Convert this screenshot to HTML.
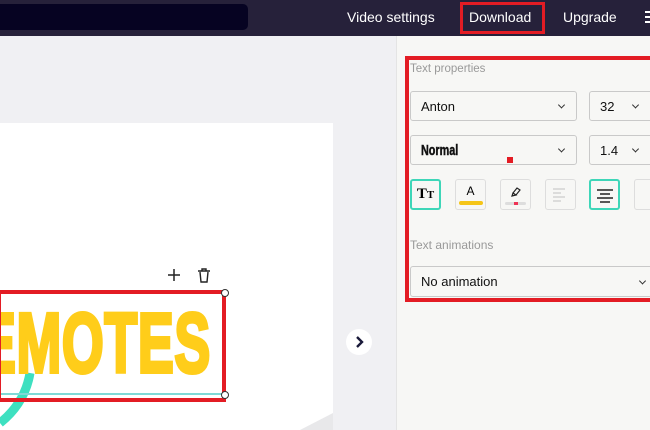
<!DOCTYPE html><html><head><style>
*{margin:0;padding:0;box-sizing:border-box}
html{width:650px;height:430px;overflow:hidden}
body{width:650px;height:430px;overflow:hidden;position:relative;background:#f0f0f3;font-family:"Liberation Sans",sans-serif}
.a{position:absolute}
.sel{position:absolute;border:1px solid #c9c9c9;border-radius:3px;background:#f7f7f5;font-size:13px;color:#111;padding-left:10px;display:flex;align-items:center}
.sel .c{position:absolute;right:12px;top:50%;width:5px;height:5px;border-right:1.3px solid #333;border-bottom:1.3px solid #333;transform:translateY(-70%) rotate(45deg)}
.ib{position:absolute;top:179px;width:31px;height:31px;border:1.5px solid #ddd;border-radius:3px;background:#f7f7f5}
</style></head><body>
<div class="a" style="left:0;top:0;width:650px;height:36px;background:#26213a"></div>
<div class="a" style="left:0;top:4px;width:248px;height:26px;background:#060322;border-radius:0 5px 5px 0"></div>
<div class="a" style="left:347px;top:9px;color:#fff;font-size:14px">Video settings</div>
<div class="a" style="left:469px;top:9px;color:#fff;font-size:14px">Download</div>
<div class="a" style="left:460px;top:2px;width:85px;height:32px;border:3px solid #e31c24"></div>
<div class="a" style="left:563px;top:9px;color:#fff;font-size:14px">Upgrade</div>
<div class="a" style="left:645px;top:11px;width:6px;height:2px;background:#fff;box-shadow:0 5px 0 #fff,0 10px 0 #fff"></div>

<div class="a" style="left:0;top:123px;width:333px;height:307px;background:#fff;overflow:hidden">
<div class="a" style="left:0;top:0;width:333px;height:307px;background:#e8e8ea;clip-path:polygon(333px 290px,333px 307px,300px 307px)"></div>
<svg class="a" style="left:0;top:230px" width="60" height="80"><path d="M30 20 Q25 50 0 70" stroke="#3ee0c0" stroke-width="9" fill="none"/></svg>
</div>
<div class="a" style="left:-20px;top:298px;font-family:'Liberation Sans',sans-serif;font-weight:bold;font-size:84px;color:#ffcd1a;-webkit-text-stroke:4px #ffcd1a;transform:scaleX(0.64);transform-origin:0 0;letter-spacing:1px;line-height:90px;white-space:nowrap;width:400px">EMOTES</div>
<div class="a" style="left:0;top:393px;width:224px;height:2px;background:#7fd9d6"></div>
<div class="a" style="left:-3px;top:290px;width:229px;height:112px;border:4px solid #e31c24"></div>
<div class="a" style="left:221px;top:289px;width:8px;height:8px;border:1px solid #333;border-radius:50%;background:#fff"></div>
<div class="a" style="left:221px;top:391px;width:8px;height:8px;border:1px solid #333;border-radius:50%;background:#fff"></div>
<div class="a" style="left:162px;top:263px;width:24px;height:24px;background:#fff;border-radius:3px"></div>
<div class="a" style="left:192px;top:263px;width:24px;height:24px;background:#fff;border-radius:3px"></div>
<svg class="a" style="left:162px;top:263px" width="54" height="24"><path d="M12 6v12M6 12h12" stroke="#222" stroke-width="1.5"/><path d="M36 8h12M40 8V6h4v2M38 9l1 10h6l1-10" stroke="#222" stroke-width="1.4" fill="none"/></svg>
<div class="a" style="left:346px;top:329px;width:26px;height:26px;border-radius:50%;background:#fff"></div>
<svg class="a" style="left:346px;top:329px" width="26" height="26"><path d="M11 8l5 5-5 5" stroke="#1a1a3a" stroke-width="2.4" fill="none"/></svg>

<div class="a" style="left:396px;top:36px;width:254px;height:394px;background:#f7f7f5;border-left:1px solid #e4e4e4"></div>
<div class="a" style="left:410px;top:63px;font-size:11.5px;color:#999">Text properties</div>
<div class="sel" style="left:410px;top:91px;width:167px;height:30px">Anton<span class="c"></span></div>
<div class="sel" style="left:589px;top:91px;width:70px;height:30px">32<span class="c" style="right:20px"></span></div>
<div class="sel" style="left:410px;top:135px;width:167px;height:30px;font-weight:bold;font-size:15px;"><span style="display:inline-block;transform:scaleX(.72);transform-origin:0 50%;-webkit-text-stroke:.5px #111">Normal</span><span class="c"></span></div>
<div class="sel" style="left:589px;top:135px;width:70px;height:30px">1.4<span class="c" style="right:20px"></span></div>
<div class="a" style="left:507px;top:157px;width:6px;height:6px;background:#e31c24"></div>
<div class="ib" style="left:410px;border:2px solid #3ed6b8;font-family:'Liberation Serif',serif;font-weight:bold;font-size:15px;text-align:center;line-height:27px">T<span style="font-size:11px">T</span></div>
<div class="ib" style="left:455px;text-align:center;font-size:12px;line-height:22px">A<div class="a" style="left:3px;top:21px;width:24px;height:4px;background:#f5c518;border-radius:2px"></div></div>
<div class="ib" style="left:500px"><svg width="28" height="28"><path d="M12 13l4-5 3 2-4 5zM11 16l1-3 3 2z" stroke="#222" fill="none" stroke-width="1.2"/><rect x="4" y="22" width="21" height="3" rx="1.5" fill="#ddd"/><rect x="13" y="22" width="4" height="3" fill="#e35"/></svg></div>
<div class="ib" style="left:545px"><svg width="28" height="28"><path d="M7 9h12M7 13h8M7 17h12M7 21h8" stroke="#ccc" stroke-width="1.2"/></svg></div>
<div class="ib" style="left:589px;border:2px solid #3ed6b8"><svg width="28" height="28"><path d="M6 9h16M9 13h10M6 17h16M9 21h10" stroke="#222" stroke-width="1.4"/></svg></div>
<div class="ib" style="left:634px"></div>
<div class="a" style="left:410px;top:238px;font-size:12px;color:#999">Text animations</div>
<div class="sel" style="left:410px;top:266px;width:250px;height:31px">No animation<span class="c" style="right:14px"></span></div>
<div class="a" style="left:405px;top:56px;width:250px;height:246px;border:4px solid #e31c24"></div>
</body></html>
